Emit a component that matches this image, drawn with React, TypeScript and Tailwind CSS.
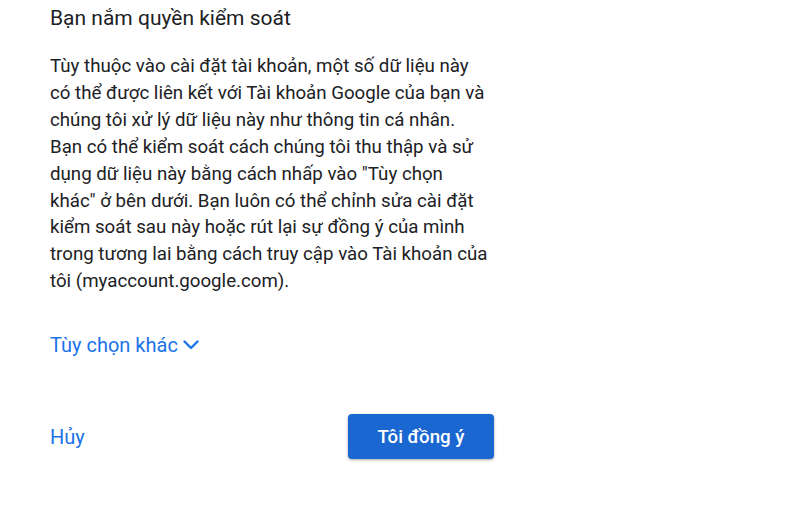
const lines = [
  'Tùy thuộc vào cài đặt tài khoản, một số dữ liệu này',
  'có thể được liên kết với Tài khoản Google của bạn và',
  'chúng tôi xử lý dữ liệu này như thông tin cá nhân.',
  'Bạn có thể kiểm soát cách chúng tôi thu thập và sử',
  'dụng dữ liệu này bằng cách nhấp vào "Tùy chọn',
  'khác" ở bên dưới. Bạn luôn có thể chỉnh sửa cài đặt',
  'kiểm soát sau này hoặc rút lại sự đồng ý của mình',
  'trong tương lai bằng cách truy cập vào Tài khoản của',
  'tôi (myaccount.google.com).',
]

export default function App() {
  return (
    <div className="w-[800px] h-[530px] bg-white font-['Roboto',sans-serif] text-[#202124]">
      <div className="ml-[50px] w-[444px] flex flex-col">
        <h2 className="mt-[6px] text-[21px] leading-[24px] font-normal whitespace-nowrap">
          Bạn nắm quyền kiểm soát
        </h2>
        <p className="mt-[23px] text-[18.7px] leading-[26.9px] whitespace-nowrap">
          {lines.map((l, i) => (
            <span key={i} className="block">
              {l}
            </span>
          ))}
        </p>
        <button className="mt-[38px] flex items-center gap-[5px] self-start text-[20px] leading-[24px] font-normal text-[#1a73e8]">
          Tùy chọn khác
          <svg width="16" height="10" viewBox="0 0 16 10" fill="none">
            <path d="M1.5 1.5l6.5 6.5 6.5-6.5" stroke="currentColor" strokeWidth="2.4" strokeLinecap="round" strokeLinejoin="round" />
          </svg>
        </button>
        <div className="mt-[57px] flex items-center justify-between">
          <button className="text-[20px] font-normal text-[#1a73e8]">Hủy</button>
          <button className="w-[146px] h-[45px] rounded-[4px] bg-[#1a67d2] text-white text-[18.7px] font-medium shadow-[0_1px_3px_rgba(0,0,0,0.35)]">
            Tôi đồng ý
          </button>
        </div>
      </div>
    </div>
  )
}
